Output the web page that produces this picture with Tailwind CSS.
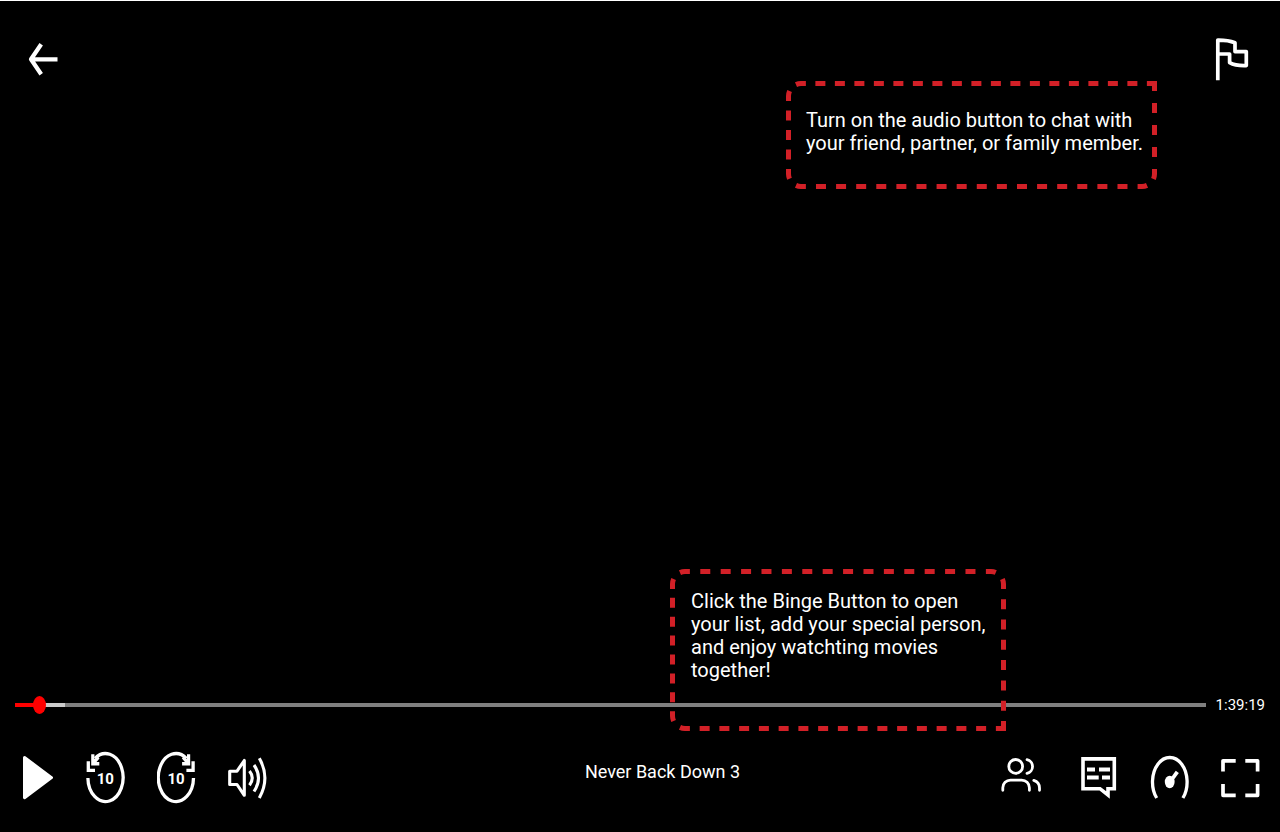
<!DOCTYPE html>
<html lang="en">
<head>
<meta charset="utf-8">
<meta name="viewport" content="width=device-width, initial-scale=1">
<title>Never Back Down 3</title>
<script src="https://cdn.jsdelivr.net/npm/@tailwindcss/browser@4"></script>
</head>
<body class="bg-black font-['Roboto',sans-serif] text-white">
<main class="relative flex min-h-screen flex-col border-t border-white bg-black">

  <header class="flex items-start justify-between pt-9 pr-[29px] pl-7">
    <button type="button" aria-label="Back" class="mt-[5px]">
      <svg class="h-[34px] w-[30px]" viewBox="0 0 30 34" fill="none" stroke="currentColor" stroke-width="4.2"><path d="M29.5 17.3H3M13.2 2.3 3 17.3 13.2 32.3" stroke-linejoin="round"/></svg>
    </button>
    <button type="button" aria-label="Report a problem">
      <svg class="h-11 w-9" viewBox="0 0 36 44" fill="none" stroke="currentColor" stroke-width="3.7"><path d="M2.8 43.3V3.1Q13 3 20 5.7V14.6H31.3V28.6Q20.5 29 14.6 25.6V17H2.8" stroke-linejoin="round"/></svg>
    </button>
  </header>

  <div class="flex-1"></div>

  <div class="flex items-center gap-2.5 pr-[15px] pl-[15px]">
    <input type="range" min="0" max="5959" value="91" aria-label="Playback position" class="h-[18px] min-w-0 flex-1 appearance-none bg-transparent [&::-webkit-slider-runnable-track]:h-1 [&::-webkit-slider-runnable-track]:bg-[linear-gradient(to_right,#ff0000_2%,#cccccc_2%,#cccccc_4.2%,#7f7f7f_4.2%)] [&::-webkit-slider-thumb]:-mt-[7px] [&::-webkit-slider-thumb]:h-[18px] [&::-webkit-slider-thumb]:w-[13px] [&::-webkit-slider-thumb]:appearance-none [&::-webkit-slider-thumb]:rounded-[50%] [&::-webkit-slider-thumb]:bg-[#ff0000]">
    <time class="text-[15px] leading-[18px]">1:39:19</time>
  </div>

  <footer class="flex items-start justify-between pt-[37px] pr-[19px] pb-[27px] pl-[15px]">
    <div class="flex gap-[31px]">
      <button type="button" aria-label="Play">
        <svg class="h-[54px] w-10" viewBox="0 0 40 54" fill="currentColor" stroke="currentColor" stroke-width="3" stroke-linejoin="round"><path d="M9.5 6.5 36.5 26.6 9.5 46.7Z"/></svg>
      </button>
      <button type="button" aria-label="Back 10 seconds">
        <svg class="h-[54px] w-10" viewBox="0 0 40 54" fill="none" stroke="currentColor" stroke-width="3.3"><path d="M1.9 27A17.6 24 0 1 0 9 7.3M2.3 10.3V19.3H9"/><path d="M5.2 3.3H8.4V8L12 5.5 13.5 7.5 10.5 11H13.3V14.6H5.2Z" fill="currentColor" stroke="none"/><text x="19.3" y="33" text-anchor="middle" fill="currentColor" stroke="none" class="text-[15px] font-bold">10</text></svg>
      </button>
      <button type="button" aria-label="Forward 10 seconds">
        <svg class="h-[54px] w-10" viewBox="0 0 40 54" fill="none" stroke="currentColor" stroke-width="3.3"><path d="M36.5 27A17.6 24 0 1 1 29.4 7.3M36.1 10.3V19.3H29.4"/><path d="M33.2 3.3H30V8L26.4 5.5 24.9 7.5 27.9 11H25.1V14.6H33.2Z" fill="currentColor" stroke="none"/><text x="19" y="33" text-anchor="middle" fill="currentColor" stroke="none" class="text-[15px] font-bold">10</text></svg>
      </button>
      <button type="button" aria-label="Volume">
        <svg class="h-[54px] w-10" viewBox="0 0 40 54" fill="none" stroke="currentColor" stroke-width="3.1"><path d="M1.7 20.2H9L16.3 9.5V44.3L9 33.5H1.7Z" stroke-linejoin="round"/><path d="M21.5 20Q27 27 21.5 34.3M26 14Q35 27 26 40.5M31.3 7.3Q42.5 27 31.3 47"/></svg>
      </button>
    </div>

    <h1 class="pt-2 pl-14 text-lg leading-[26px]">Never Back Down 3</h1>

    <div class="flex gap-[31px]">
      <button type="button" aria-label="Binge with friends" class="mr-[7px]">
        <svg class="h-[54px] w-10" viewBox="0 0 40 54" fill="none" stroke="currentColor" stroke-width="2.8" stroke-linecap="round"><circle cx="14.7" cy="15.4" r="6.9"/><path d="M26 8.7A7 7 0 0 1 26 22.4M1.8 39.3V36.8A7.7 7.7 0 0 1 9.5 29.1H20.7A7.7 7.7 0 0 1 28.4 36.8V39.3M32.8 29.4A8 8 0 0 1 38.5 37V39.3"/></svg>
      </button>
      <button type="button" aria-label="Subtitles">
        <svg class="h-[54px] w-10" viewBox="0 0 40 54" fill="none" stroke="currentColor" stroke-width="3.6"><path d="M4 7.9H35.3V37.7H29V44L21 37.7H4Z"/><path d="M8 18.5H16M20 18.5H31M8 26.5H19.7M23 26.5H31" stroke-width="4"/></svg>
      </button>
      <button type="button" aria-label="Playback speed">
        <svg class="h-[54px] w-10" viewBox="0 0 40 54" fill="none" stroke="currentColor" stroke-width="3.3"><path d="M6.7 47A17.3 24.5 0 1 1 32.9 47"/><ellipse cx="19.7" cy="31" rx="4.9" ry="6.2" fill="currentColor" stroke="none"/><path d="M20 31 27.3 20.8" stroke-width="3.8"/></svg>
      </button>
      <button type="button" aria-label="Full screen">
        <svg class="h-[54px] w-10" viewBox="0 0 40 54" fill="none" stroke="currentColor" stroke-width="3.7" stroke-linejoin="round"><path d="M2 20.5V9.8H14.7M24.3 9.8H36.6V20.5M36.6 33V44.3H24.3M14.7 44.3H2V33"/></svg>
      </button>
    </div>
  </footer>

  <!-- Hint: audio chat -->
  <aside class="absolute top-20 right-[123px] h-[108px] w-[371px] pt-7 pl-5">
    <svg class="absolute inset-0 h-full w-full" viewBox="0 0 371 108" fill="none" stroke="#d22027" stroke-width="5" aria-hidden="true">
      <path d="M10 3.6A12.5 12.5 0 0 1 15 2.5H371" stroke-dasharray="10 9.5"/>
      <path d="M3.6 10A12.5 12.5 0 0 0 2.5 15V93A12.5 12.5 0 0 0 3.6 98" stroke-dasharray="10 9.5"/>
      <path d="M10 104.4A12.5 12.5 0 0 0 15 105.5H356A12.5 12.5 0 0 0 361 104.4" stroke-dasharray="10 10.1"/>
      <path d="M368.5 0V93A12.5 12.5 0 0 1 367.4 98" stroke-dasharray="10 12"/>
    </svg>
    <p class="text-xl leading-[23px]">Turn on the audio button to chat with<br>your friend, partner, or family member.</p>
  </aside>

  <!-- Hint: Binge button -->
  <aside class="absolute right-[274px] bottom-[101px] h-[162px] w-[336px] pt-[21px] pl-[21px]">
    <svg class="absolute inset-0 h-full w-full" viewBox="0 0 336 162" fill="none" stroke="#d22027" stroke-width="5" aria-hidden="true">
      <path d="M10 3.6A12.5 12.5 0 0 1 15 2.5H321A12.5 12.5 0 0 1 326 3.6" stroke-dasharray="10 10.4"/>
      <path d="M3.6 10A12.5 12.5 0 0 0 2.5 15V147A12.5 12.5 0 0 0 3.6 152" stroke-dasharray="10 8.9"/>
      <path d="M10 158.4A12.5 12.5 0 0 0 15 159.5H336" stroke-dasharray="10 9.75"/>
      <path d="M332.4 10A12.5 12.5 0 0 1 333.5 15V162" stroke-dasharray="10 10.3"/>
    </svg>
    <p class="text-xl leading-[23px]">Click the Binge Button to open<br>your list, add your special person,<br>and enjoy watchting movies<br>together!</p>
  </aside>
</main>
</body>
</html>
